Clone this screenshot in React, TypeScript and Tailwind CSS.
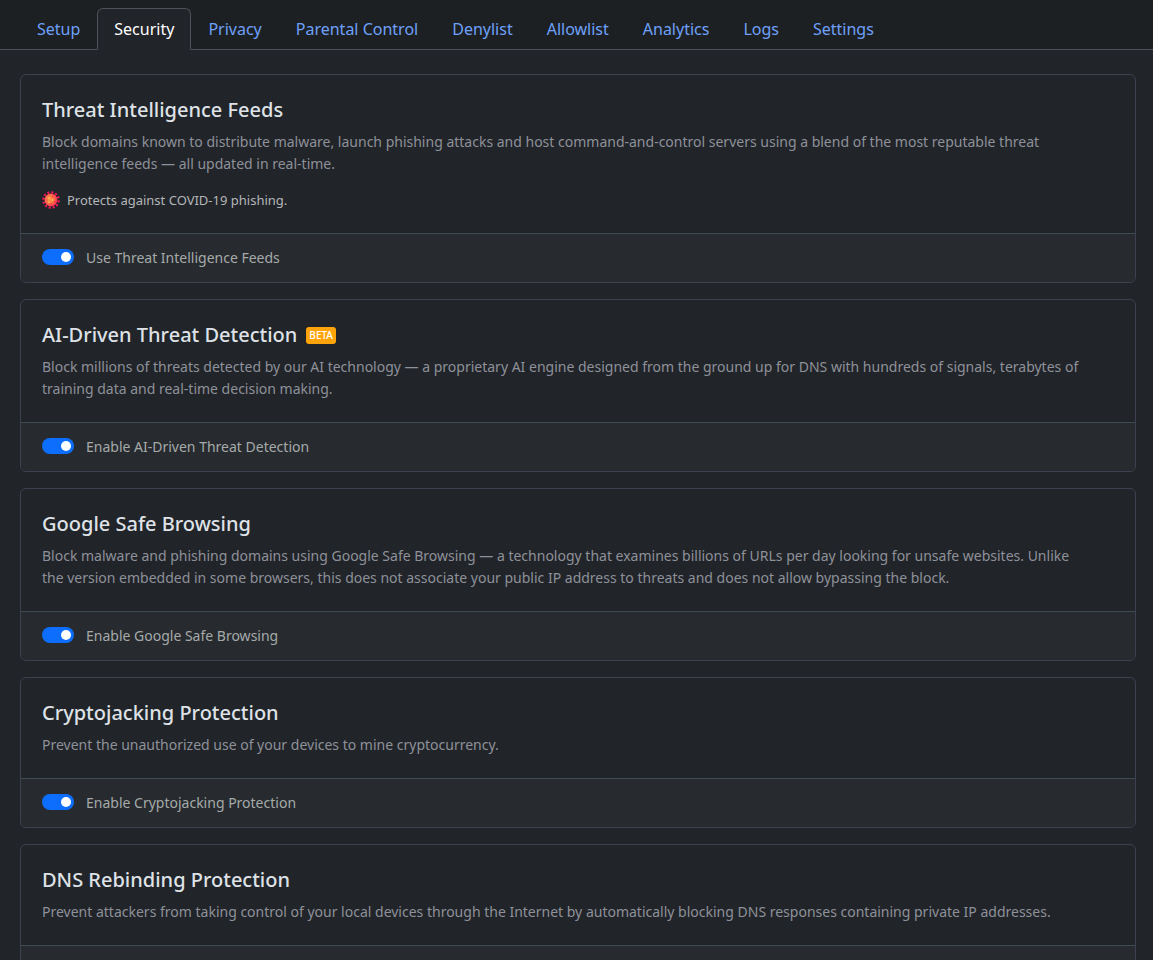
import { useState, type ReactNode } from "react";

const tabs = [
  "Setup",
  "Security",
  "Privacy",
  "Parental Control",
  "Denylist",
  "Allowlist",
  "Analytics",
  "Logs",
  "Settings",
];

type Feature = {
  id: string;
  title: string;
  beta?: boolean;
  description: string;
  note?: string;
  toggle: string;
};

const features: Feature[] = [
  {
    id: "threat-feeds",
    title: "Threat Intelligence Feeds",
    description:
      "Block domains known to distribute malware, launch phishing attacks and host command-and-control servers using a blend of the most reputable threat intelligence feeds — all updated in real-time.",
    note: "Protects against COVID-19 phishing.",
    toggle: "Use Threat Intelligence Feeds",
  },
  {
    id: "ai-detection",
    title: "AI-Driven Threat Detection",
    beta: true,
    description:
      "Block millions of threats detected by our AI technology — a proprietary AI engine designed from the ground up for DNS with hundreds of signals, terabytes of training data and real-time decision making.",
    toggle: "Enable AI-Driven Threat Detection",
  },
  {
    id: "safe-browsing",
    title: "Google Safe Browsing",
    description:
      "Block malware and phishing domains using Google Safe Browsing — a technology that examines billions of URLs per day looking for unsafe websites. Unlike the version embedded in some browsers, this does not associate your public IP address to threats and does not allow bypassing the block.",
    toggle: "Enable Google Safe Browsing",
  },
  {
    id: "cryptojacking",
    title: "Cryptojacking Protection",
    description: "Prevent the unauthorized use of your devices to mine cryptocurrency.",
    toggle: "Enable Cryptojacking Protection",
  },
  {
    id: "dns-rebinding",
    title: "DNS Rebinding Protection",
    description:
      "Prevent attackers from taking control of your local devices through the Internet by automatically blocking DNS responses containing private IP addresses.",
    toggle: "Enable DNS Rebinding Protection",
  },
];

const spikes = [0, 30, 60, 90, 120, 150, 180, 210, 240, 270, 300, 330];

function VirusIcon() {
  return (
    <svg viewBox="0 0 36 36" className="size-[18px] shrink-0" aria-hidden="true">
      <defs>
        <radialGradient id="virus-body" cx="0.42" cy="0.45" r="0.6">
          <stop offset="0" stopColor="#ff9a45" />
          <stop offset="0.55" stopColor="#ff7048" />
          <stop offset="1" stopColor="#f42552" />
        </radialGradient>
      </defs>
      {spikes.map((angle) => (
        <g key={angle} transform={`rotate(${angle + 10} 18 18)`} fill="#f0145c" stroke="#f0145c">
          <path d="M18 8V2" strokeWidth="2" />
          <ellipse cx="18" cy="2" rx="2.7" ry="1.8" stroke="none" />
        </g>
      ))}
      <circle cx="18" cy="18" r="13" fill="url(#virus-body)" />
      <g fill="#ffb04f">
        <circle cx="14" cy="14" r="2.2" />
        <circle cx="21" cy="18" r="2" />
        <circle cx="14" cy="22" r="1.8" />
      </g>
      <g fill="#f5264f">
        <circle cx="21" cy="11" r="1.3" />
        <circle cx="25" cy="21" r="1.4" />
        <circle cx="18" cy="26" r="1.3" />
        <circle cx="10" cy="18" r="1.1" />
      </g>
    </svg>
  );
}

function Switch({ id, children }: { id: string; children: ReactNode }) {
  const [on, setOn] = useState(true);
  return (
    <div className="flex gap-3 rounded-b-[5px] bg-[#272b2f] px-[21px] pt-[13px] pb-[13px]">
      <input
        id={id}
        type="checkbox"
        role="switch"
        checked={on}
        onChange={() => setOn(!on)}
        className="mt-[2px] flex h-4 w-8 cursor-pointer appearance-none items-center rounded-full bg-[#495057] px-[3px] before:size-[10px] before:rounded-full before:bg-white checked:justify-end checked:bg-[#0d6efd]"
      />
      <label htmlFor={id} className="cursor-pointer text-[14px] leading-[22px] text-[#a5aaa9]">
        {children}
      </label>
    </div>
  );
}

function FeatureCard({ feature }: { feature: Feature }) {
  return (
    <section className="rounded-md border border-[#3e4050]">
      <div className="border-b border-[#3b4d52] px-[21px] py-[22px]">
        <div className="mb-2 flex items-center gap-[9px]">
          <h2 className="text-[20px] leading-[26px] font-medium text-[#dee2e6]">{feature.title}</h2>
          {feature.beta && (
            <span className="rounded-[3px] bg-[#ffa408] px-[3px] text-[10px] leading-[17px] font-medium text-white">
              BETA
            </span>
          )}
        </div>
        <p className="pr-7 text-[14px] leading-[22px] text-[#8e9199]">{feature.description}</p>
        {feature.note && (
          <div className="mt-[14px] flex items-center gap-[7px]">
            <VirusIcon />
            <span className="text-[13px] leading-[22px] text-[#b4b7b9]">{feature.note}</span>
          </div>
        )}
      </div>
      <Switch id={feature.id}>{feature.toggle}</Switch>
    </section>
  );
}

export default function App() {
  return (
    <div className="h-screen overflow-hidden bg-[#212429] font-['Noto_Sans',sans-serif]">
      <header className="border-b border-[#52505a] bg-[#1d2023] pt-2 pl-5">
        <nav className="-mb-px flex">
          {tabs.map((tab) => (
            <a
              key={tab}
              href={`#${tab.toLowerCase().replace(" ", "-")}`}
              aria-current={tab === "Security" ? "page" : undefined}
              className={
                tab === "Security"
                  ? "rounded-t-md border border-[#52505a] border-b-[#212429] bg-[#212429] px-4 py-2 text-[16px] leading-6 text-white"
                  : "border border-transparent px-4 py-2 text-[16px] leading-6 text-[#6ea0fa]"
              }
            >
              {tab}
            </a>
          ))}
        </nav>
      </header>
      <main className="flex flex-col gap-4 pt-6 pr-[17px] pb-6 pl-5">
        {features.map((feature) => (
          <FeatureCard key={feature.id} feature={feature} />
        ))}
      </main>
    </div>
  );
}
